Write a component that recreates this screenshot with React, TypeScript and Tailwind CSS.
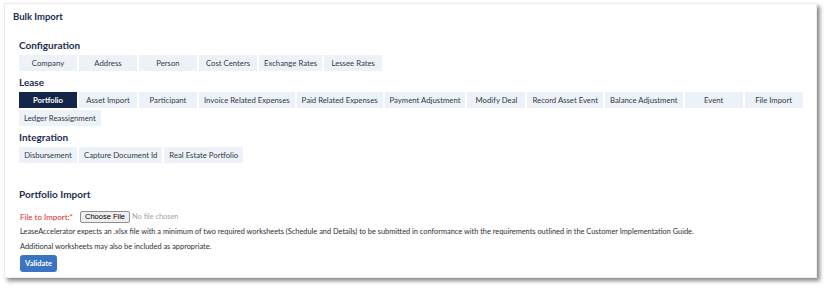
import React from 'react';

const configuration = ['Company', 'Address', 'Person', 'Cost Centers', 'Exchange Rates', 'Lessee Rates'];
const lease = [
    'Portfolio',
    'Asset Import',
    'Participant',
    'Invoice Related Expenses',
    'Paid Related Expenses',
    'Payment Adjustment',
    'Modify Deal',
    'Record Asset Event',
    'Balance Adjustment',
    'Event',
    'File Import',
    'Ledger Reassignment',
];
const integration = ['Disbursement', 'Capture Document Id', 'Real Estate Portfolio'];

function TabButton({ label, active }: { label: string; active?: boolean }) {
    return (
        <button
            className={`h-[16px] min-w-[58px] px-[5px] text-[7.75px] leading-[16px] whitespace-nowrap ${
                active ? 'bg-[#13264a] text-white font-bold' : 'bg-[#edf2f8] text-[#333a45]'
            }`}
        >
            {label}
        </button>
    );
}

function Group({ title, items, active }: { title: string; items: string[]; active?: string }) {
    return (
        <div>
            <h3 className="text-[10px] font-bold text-[#1c2d4f] leading-[14px] mb-[3px]">{title}</h3>
            <div className="flex flex-wrap gap-[2px]">
                {items.map((item) => (
                    <TabButton key={item} label={item} active={item === active} />
                ))}
            </div>
        </div>
    );
}

export default function App() {
    return (
        <div className="bg-white min-h-[290px] pt-[3px] pl-[4px]" style={{ fontFamily: 'Lato, "Open Sans", sans-serif' }}>
            <div className="w-[813px] h-[275px] bg-white border border-[#ececec] shadow-[3px_3px_4px_rgba(0,0,0,0.45)] pl-[14px] pr-[6px]">
                <h2 className="text-[9.5px] font-bold text-[#1c2d4f] pt-[7px] -ml-[6px] leading-[12px]">Bulk Import</h2>

                <div className="mt-[15px] flex flex-col gap-[4px]">
                    <Group title="Configuration" items={configuration} />
                    <Group title="Lease" items={lease} active="Portfolio" />
                    <Group title="Integration" items={integration} />
                </div>

                <h3 className="mt-[24px] text-[10px] font-bold text-[#1c2d4f] leading-[14px]">Portfolio Import</h3>

                <div className="mt-[9px] pl-[1px] flex items-center gap-[7px] h-[13px]">
                    <span className="text-[8px] text-[#e0282e]">File to Import:*</span>
                    <div className="flex items-center gap-[2px]">
                        <span
                            className="h-[12px] px-[4px] border border-[#8f8f8f] bg-[#efefef] rounded-[2px] text-[7.5px] leading-[10px] text-black"
                            style={{ fontFamily: '"Liberation Sans", Arial, sans-serif' }}
                        >
                            Choose File
                        </span>
                        <span className="text-[7.4px] text-[#a3a3a3]">No file chosen</span>
                    </div>
                </div>

                <p className="mt-[3px] pl-[1px] text-[7.4px] text-[#2b2f36] leading-[11px]">
                    LeaseAccelerator expects an .xlsx file with a minimum of two required worksheets (Schedule and Details) to be submitted in conformance with the requirements outlined in the Customer Implementation Guide.
                </p>
                <p className="mt-[4px] pl-[1px] text-[7.4px] text-[#2b2f36] leading-[11px]">
                    Additional worksheets may also be included as appropriate.
                </p>

                <button className="block mt-[3px] ml-[1px] h-[17px] px-[5px] rounded-[3px] bg-[#3a75c4] text-white text-[7.5px] font-bold">
                    Validate
                </button>
            </div>
        </div>
    );
}
